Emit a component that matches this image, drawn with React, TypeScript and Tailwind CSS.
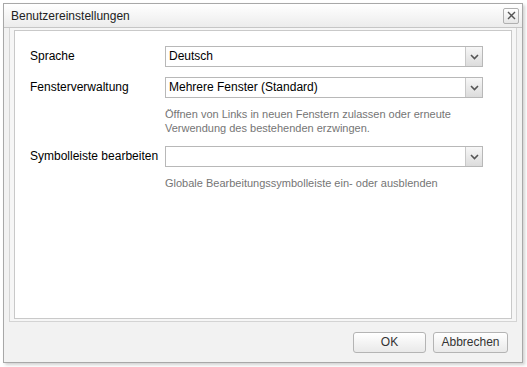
function Select({ value }: { value: string }) {
  return (
    <div className="flex h-[21px] w-[318px] border border-[#b8b8b8] bg-white">
      <div className="flex-1 truncate pl-[3px] text-[12px] leading-[19px] text-black">{value}</div>
      <div className="flex w-[17px] items-center justify-center border-l border-[#c8c8c8] bg-gradient-to-b from-[#f7f7f7] to-[#dcdcdc]">
        <svg width="9" height="6" viewBox="0 0 9 6">
          <path d="M1 1 L4.5 4.5 L8 1" fill="none" stroke="#555" strokeWidth="1.6" />
        </svg>
      </div>
    </div>
  );
}

function Row({ label, value, help }: { label: string; value: string; help?: string[] }) {
  return (
    <div className="flex">
      <div className="w-[135px] text-[12px] leading-[21px] text-black">{label}</div>
      <div className="flex flex-col">
        <Select value={value} />
        {help && (
          <div className="mt-[9px] text-[11px] leading-[14px] text-[#757575]">
            {help.map((l) => (
              <div key={l}>{l}</div>
            ))}
          </div>
        )}
      </div>
    </div>
  );
}

export default function App() {
  return (
    <div
      className="h-[367px] w-[527px] bg-white pl-[3px] pt-[3px]"
      style={{ fontFamily: '"Liberation Sans", Arial, sans-serif' }}
    >
      <div className="flex h-[360px] w-[520px] flex-col border border-[#a8a8a8] bg-[#f2f2f2] shadow-[2px_2px_3px_rgba(0,0,0,0.18)]">
        <div className="flex h-[24px] items-center justify-between border-b border-[#c6c6c6] bg-gradient-to-b from-white to-[#ececec] pl-[7px] pr-[3px]">
          <span className="text-[12px] text-[#222]">Benutzereinstellungen</span>
          <div className="flex h-[16px] w-[16px] items-center justify-center rounded-[2px] border border-[#b0b0b0] bg-gradient-to-b from-white to-[#e6e6e6]">
            <svg width="9" height="9" viewBox="0 0 9 9">
              <path d="M1 1 L8 8 M8 1 L1 8" stroke="#555" strokeWidth="1.4" />
            </svg>
          </div>
        </div>
        <div className="mx-[5px] border border-t-0 border-[#d4d4d4] bg-[#f6f6f6] px-[4px] pb-[2px] pt-[2px]">
          <div className="flex h-[289px] flex-col gap-[10px] border border-[#c9c9c9] bg-white pl-[15px] pt-[15px]">
            <Row label="Sprache" value="Deutsch" />
            <Row
              label="Fensterverwaltung"
              value="Mehrere Fenster (Standard)"
              help={[
                "Öffnen von Links in neuen Fenstern zulassen oder erneute",
                "Verwendung des bestehenden erzwingen.",
              ]}
            />
            <div className="mt-[1px]">
              <Row
                label="Symbolleiste bearbeiten"
                value=""
                help={["Globale Bearbeitungssymbolleiste ein- oder ausblenden"]}
              />
            </div>
          </div>
        </div>
        <div className="flex flex-1 items-center justify-end gap-[7px] pr-[14px]">
          <button className="h-[21px] w-[73px] rounded-[3px] border border-[#b4b4b4] bg-gradient-to-b from-white to-[#e9e9e9] text-[12px] text-[#333]">
            OK
          </button>
          <button className="h-[21px] w-[75px] rounded-[3px] border border-[#b4b4b4] bg-gradient-to-b from-white to-[#e9e9e9] text-[12px] text-[#333]">
            Abbrechen
          </button>
        </div>
      </div>
    </div>
  );
}
